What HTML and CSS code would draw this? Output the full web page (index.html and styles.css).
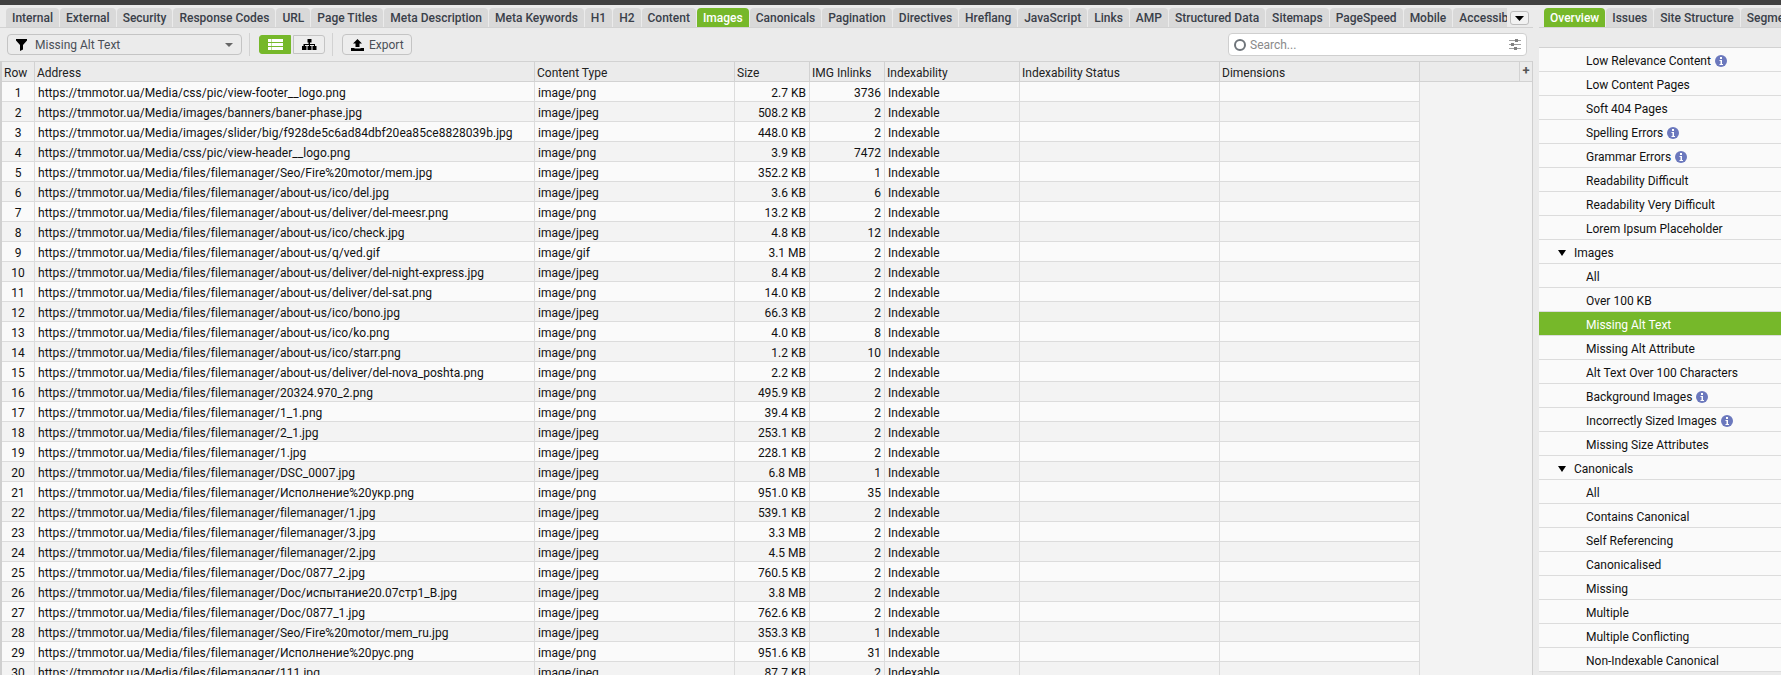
FILE: index.html
```html
<!DOCTYPE html>
<html lang="en">
<head>
    <meta charset="UTF-8">
    <title>Images - Missing Alt Text</title>
    <link rel="stylesheet" href="styles.css">
</head>
<body>
    <div class="titlebar"></div>
    <div class="panes">
        <div class="left-pane">
            <div class="tab-line">
                <div class="tabs">
                    <span class="tab">Internal</span>
                    <span class="tab">External</span>
                    <span class="tab">Security</span>
                    <span class="tab">Response Codes</span>
                    <span class="tab">URL</span>
                    <span class="tab">Page Titles</span>
                    <span class="tab">Meta Description</span>
                    <span class="tab">Meta Keywords</span>
                    <span class="tab">H1</span>
                    <span class="tab">H2</span>
                    <span class="tab">Content</span>
                    <span class="tab active">Images</span>
                    <span class="tab">Canonicals</span>
                    <span class="tab">Pagination</span>
                    <span class="tab">Directives</span>
                    <span class="tab">Hreflang</span>
                    <span class="tab">JavaScript</span>
                    <span class="tab">Links</span>
                    <span class="tab">AMP</span>
                    <span class="tab">Structured Data</span>
                    <span class="tab">Sitemaps</span>
                    <span class="tab">PageSpeed</span>
                    <span class="tab">Mobile</span>
                    <span class="tab">Accessibility</span>
                </div>
                <button class="more-tabs"><svg width="9" height="5" viewBox="0 0 9 5"><path d="M0 0h9L4.500 5z"/></svg></button>
            </div>
            <div class="toolbar">
                <div class="filter-select">
                    <svg class="funnel" width="11" height="12" viewBox="0 0 11 12"><path d="M0 0h11v1.500L7 6v4.500L4 12V6L0 1.500z"/></svg>
                    <span class="filter-label">Missing Alt Text</span>
                    <svg class="caret" width="8" height="4" viewBox="0 0 8 4"><path d="M0 0h8L4 4z"/></svg>
                </div>
                <span class="tool-sep"></span>
                <div class="view-toggle">
                    <button class="view-btn on">
                        <svg width="15" height="11" viewBox="0 0 15 11"><path d="M0 0h3v3H0zM3.500 0H15v3H3.500zM0 4h3v3H0zM3.500 4H15v3H3.500zM0 8h3v3H0zM3.500 8H15v3H3.500z"/></svg>
                    </button>
                    <button class="view-btn">
                        <svg width="15" height="11" viewBox="0 0 15 11"><path d="M5.500 0h4v3.500h-1.500v1.500h5v2h1.500v4h-4V7h1.500V6h-4v1h1.500v4h-4V7h1.500V6h-4v1h1.500v4H0V7h1.500V5h5V3.500H5.500z"/></svg>
                    </button>
                </div>
                <span class="tool-sep"></span>
                <button class="export-btn">
                    <svg width="13" height="12" viewBox="0 0 13 12"><path d="M6.500 0L11 4.500H8.500V8h-4V4.500H2zM0 9h3.500v.5h6V9H13v3H0z"/></svg>
                    Export
                </button>
                <div class="search-box">
                    <svg width="12" height="12" viewBox="0 0 12 12"><circle cx="6" cy="6" r="5" fill="none" stroke="#6f757b" stroke-width="2"/></svg>
                    <span class="search-text">Search...</span>
                    <svg class="sliders" width="12" height="11" viewBox="0 0 12 11"><path d="M0 1h12v1H0zM0 5h12v1H0zM0 9h12v1H0z" fill="#a0a0a0"/><path d="M6 0h3v3H6zM2 4h3v3H2zM5 8h3v3H5z" fill="#808080"/></svg>
                </div>
            </div>
            <div class="grid-wrap">
                <table class="grid">
                    <colgroup>
                        <col class="c-row"><col class="c-address"><col class="c-type"><col class="c-size"><col class="c-inlinks"><col class="c-index"><col class="c-status"><col class="c-dim"><col class="c-fill"><col class="c-plus">
                    </colgroup>
                    <thead>
                        <tr><th>Row</th><th>Address</th><th>Content Type</th><th>Size</th><th>IMG Inlinks</th><th>Indexability</th><th>Indexability Status</th><th>Dimensions</th><th></th><th class="plus">+</th></tr>
                    </thead>
                    <tbody>
                        <tr><td class="num">1</td><td class="url">https://tmmotor.ua/Media/css/pic/view-footer__logo.png</td><td>image/png</td><td class="r">2.7 KB</td><td class="r">3736</td><td>Indexable</td><td></td><td></td></tr>
                        <tr><td class="num">2</td><td class="url">https://tmmotor.ua/Media/images/banners/baner-phase.jpg</td><td>image/jpeg</td><td class="r">508.2 KB</td><td class="r">2</td><td>Indexable</td><td></td><td></td></tr>
                        <tr><td class="num">3</td><td class="url">https://tmmotor.ua/Media/images/slider/big/f928de5c6ad84dbf20ea85ce8828039b.jpg</td><td>image/jpeg</td><td class="r">448.0 KB</td><td class="r">2</td><td>Indexable</td><td></td><td></td></tr>
                        <tr><td class="num">4</td><td class="url">https://tmmotor.ua/Media/css/pic/view-header__logo.png</td><td>image/png</td><td class="r">3.9 KB</td><td class="r">7472</td><td>Indexable</td><td></td><td></td></tr>
                        <tr><td class="num">5</td><td class="url">https://tmmotor.ua/Media/files/filemanager/Seo/Fire%20motor/mem.jpg</td><td>image/jpeg</td><td class="r">352.2 KB</td><td class="r">1</td><td>Indexable</td><td></td><td></td></tr>
                        <tr><td class="num">6</td><td class="url">https://tmmotor.ua/Media/files/filemanager/about-us/ico/del.jpg</td><td>image/jpeg</td><td class="r">3.6 KB</td><td class="r">6</td><td>Indexable</td><td></td><td></td></tr>
                        <tr><td class="num">7</td><td class="url">https://tmmotor.ua/Media/files/filemanager/about-us/deliver/del-meesr.png</td><td>image/png</td><td class="r">13.2 KB</td><td class="r">2</td><td>Indexable</td><td></td><td></td></tr>
                        <tr><td class="num">8</td><td class="url">https://tmmotor.ua/Media/files/filemanager/about-us/ico/check.jpg</td><td>image/jpeg</td><td class="r">4.8 KB</td><td class="r">12</td><td>Indexable</td><td></td><td></td></tr>
                        <tr><td class="num">9</td><td class="url">https://tmmotor.ua/Media/files/filemanager/about-us/q/ved.gif</td><td>image/gif</td><td class="r">3.1 MB</td><td class="r">2</td><td>Indexable</td><td></td><td></td></tr>
                        <tr><td class="num">10</td><td class="url">https://tmmotor.ua/Media/files/filemanager/about-us/deliver/del-night-express.jpg</td><td>image/jpeg</td><td class="r">8.4 KB</td><td class="r">2</td><td>Indexable</td><td></td><td></td></tr>
                        <tr><td class="num">11</td><td class="url">https://tmmotor.ua/Media/files/filemanager/about-us/deliver/del-sat.png</td><td>image/png</td><td class="r">14.0 KB</td><td class="r">2</td><td>Indexable</td><td></td><td></td></tr>
                        <tr><td class="num">12</td><td class="url">https://tmmotor.ua/Media/files/filemanager/about-us/ico/bono.jpg</td><td>image/jpeg</td><td class="r">66.3 KB</td><td class="r">2</td><td>Indexable</td><td></td><td></td></tr>
                        <tr><td class="num">13</td><td class="url">https://tmmotor.ua/Media/files/filemanager/about-us/ico/ko.png</td><td>image/png</td><td class="r">4.0 KB</td><td class="r">8</td><td>Indexable</td><td></td><td></td></tr>
                        <tr><td class="num">14</td><td class="url">https://tmmotor.ua/Media/files/filemanager/about-us/ico/starr.png</td><td>image/png</td><td class="r">1.2 KB</td><td class="r">10</td><td>Indexable</td><td></td><td></td></tr>
                        <tr><td class="num">15</td><td class="url">https://tmmotor.ua/Media/files/filemanager/about-us/deliver/del-nova_poshta.png</td><td>image/png</td><td class="r">2.2 KB</td><td class="r">2</td><td>Indexable</td><td></td><td></td></tr>
                        <tr><td class="num">16</td><td class="url">https://tmmotor.ua/Media/files/filemanager/20324.970_2.png</td><td>image/png</td><td class="r">495.9 KB</td><td class="r">2</td><td>Indexable</td><td></td><td></td></tr>
                        <tr><td class="num">17</td><td class="url">https://tmmotor.ua/Media/files/filemanager/1_1.png</td><td>image/png</td><td class="r">39.4 KB</td><td class="r">2</td><td>Indexable</td><td></td><td></td></tr>
                        <tr><td class="num">18</td><td class="url">https://tmmotor.ua/Media/files/filemanager/2_1.jpg</td><td>image/jpeg</td><td class="r">253.1 KB</td><td class="r">2</td><td>Indexable</td><td></td><td></td></tr>
                        <tr><td class="num">19</td><td class="url">https://tmmotor.ua/Media/files/filemanager/1.jpg</td><td>image/jpeg</td><td class="r">228.1 KB</td><td class="r">2</td><td>Indexable</td><td></td><td></td></tr>
                        <tr><td class="num">20</td><td class="url">https://tmmotor.ua/Media/files/filemanager/DSC_0007.jpg</td><td>image/jpeg</td><td class="r">6.8 MB</td><td class="r">1</td><td>Indexable</td><td></td><td></td></tr>
                        <tr><td class="num">21</td><td class="url">https://tmmotor.ua/Media/files/filemanager/Исполнение%20укр.png</td><td>image/png</td><td class="r">951.0 KB</td><td class="r">35</td><td>Indexable</td><td></td><td></td></tr>
                        <tr><td class="num">22</td><td class="url">https://tmmotor.ua/Media/files/filemanager/filemanager/1.jpg</td><td>image/jpeg</td><td class="r">539.1 KB</td><td class="r">2</td><td>Indexable</td><td></td><td></td></tr>
                        <tr><td class="num">23</td><td class="url">https://tmmotor.ua/Media/files/filemanager/filemanager/3.jpg</td><td>image/jpeg</td><td class="r">3.3 MB</td><td class="r">2</td><td>Indexable</td><td></td><td></td></tr>
                        <tr><td class="num">24</td><td class="url">https://tmmotor.ua/Media/files/filemanager/filemanager/2.jpg</td><td>image/jpeg</td><td class="r">4.5 MB</td><td class="r">2</td><td>Indexable</td><td></td><td></td></tr>
                        <tr><td class="num">25</td><td class="url">https://tmmotor.ua/Media/files/filemanager/Doc/0877_2.jpg</td><td>image/jpeg</td><td class="r">760.5 KB</td><td class="r">2</td><td>Indexable</td><td></td><td></td></tr>
                        <tr><td class="num">26</td><td class="url">https://tmmotor.ua/Media/files/filemanager/Doc/испытание20.07стр1_B.jpg</td><td>image/jpeg</td><td class="r">3.8 MB</td><td class="r">2</td><td>Indexable</td><td></td><td></td></tr>
                        <tr><td class="num">27</td><td class="url">https://tmmotor.ua/Media/files/filemanager/Doc/0877_1.jpg</td><td>image/jpeg</td><td class="r">762.6 KB</td><td class="r">2</td><td>Indexable</td><td></td><td></td></tr>
                        <tr><td class="num">28</td><td class="url">https://tmmotor.ua/Media/files/filemanager/Seo/Fire%20motor/mem_ru.jpg</td><td>image/jpeg</td><td class="r">353.3 KB</td><td class="r">1</td><td>Indexable</td><td></td><td></td></tr>
                        <tr><td class="num">29</td><td class="url">https://tmmotor.ua/Media/files/filemanager/Исполнение%20рус.png</td><td>image/png</td><td class="r">951.6 KB</td><td class="r">31</td><td>Indexable</td><td></td><td></td></tr>
                        <tr><td class="num">30</td><td class="url">https://tmmotor.ua/Media/files/filemanager/111.jpg</td><td>image/jpeg</td><td class="r">87.7 KB</td><td class="r">2</td><td>Indexable</td><td></td><td></td></tr>
                    </tbody>
                </table>
            </div>
        </div>
        <div class="right-pane">
            <div class="tab-line side">
                <div class="tabs">
                    <span class="tab active">Overview</span>
                    <span class="tab">Issues</span>
                    <span class="tab">Site Structure</span>
                    <span class="tab">Segments</span>
                </div>
            </div>
            <div class="side-toolbar"></div>
            <svg class="icon-defs" width="0" height="0">
                <symbol id="info" viewBox="0 0 12 12">
                    <circle cx="6" cy="6" r="6" fill="#6b78bd"/>
                    <rect x="5" y="2" width="2" height="2" fill="#fff"/>
                    <path d="M4.500 5H7v4h1v1H4.500V9h1V6h-1z" fill="#fff"/>
                </symbol>
            </svg>
            <ul class="tree">
                <li>Low Relevance Content <svg class="info"><use href="#info"/></svg></li>
                <li>Low Content Pages</li>
                <li>Soft 404 Pages</li>
                <li>Spelling Errors <svg class="info"><use href="#info"/></svg></li>
                <li>Grammar Errors <svg class="info"><use href="#info"/></svg></li>
                <li>Readability Difficult</li>
                <li>Readability Very Difficult</li>
                <li>Lorem Ipsum Placeholder</li>
                <li class="group"><svg class="arrow" width="8" height="6" viewBox="0 0 8 6"><path d="M0 0h8L4 6z"/></svg>Images</li>
                <li>All</li>
                <li>Over 100 KB</li>
                <li class="selected">Missing Alt Text</li>
                <li>Missing Alt Attribute</li>
                <li>Alt Text Over 100 Characters</li>
                <li>Background Images <svg class="info"><use href="#info"/></svg></li>
                <li>Incorrectly Sized Images <svg class="info"><use href="#info"/></svg></li>
                <li>Missing Size Attributes</li>
                <li class="group"><svg class="arrow" width="8" height="6" viewBox="0 0 8 6"><path d="M0 0h8L4 6z"/></svg>Canonicals</li>
                <li>All</li>
                <li>Contains Canonical</li>
                <li>Self Referencing</li>
                <li>Canonicalised</li>
                <li>Missing</li>
                <li>Multiple</li>
                <li>Multiple Conflicting</li>
                <li>Non-Indexable Canonical</li>
            </ul>
        </div>
    </div>
</body>
</html>
```

FILE: styles.css
```css
html, body {
    height: 100%;
}
body {
    margin: 0;
    overflow: hidden;
    font-family: Roboto, "Liberation Sans", sans-serif;
    font-size: 12px;
    color: #111;
    background-color: #ebebeb;
}
.titlebar {
    height: 5px;
    margin-bottom: 3px;
    background-color: #414141;
}
.panes {
    display: flex;
    height: 667px;
}
.left-pane {
    display: flex;
    flex-direction: column;
    width: 1533px;
    flex-shrink: 0;
}
.right-pane {
    width: 242px;
    margin-left: 6px;
    flex-shrink: 0;
    overflow: hidden;
}

/* tabs */
.tab-line {
    display: flex;
    height: 19px;
    padding-left: 6px;
    border-bottom: 1px solid #d2d2d2;
    box-sizing: content-box;
}
.tab-line.side {
    padding-left: 5px;
    width: 400px;
}
.tabs {
    display: flex;
    gap: 1px;
    width: 1501px;
    overflow: hidden;
}
.side .tabs {
    width: auto;
}
.tab {
    flex-shrink: 0;
    height: 19px;
    padding: 0 6px;
    line-height: 21px;
    font-weight: 500;
    color: #3a4049;
    background-color: #d9d9d9;
    border-radius: 4px 4px 0 0;
}
.tab.active {
    color: #fff;
    background-color: #76b82a;
}
.more-tabs {
    display: flex;
    align-items: center;
    justify-content: center;
    width: 19px;
    height: 14px;
    margin: 3px 0 0 3px;
    padding: 0;
    background-color: #f2f2f2;
    border: 1px solid #bdbdbd;
    border-radius: 3px;
}

/* toolbar */
.toolbar {
    display: flex;
    align-items: center;
    height: 33px;
    padding-left: 7px;
    color: #4a4f57;
}
.filter-select {
    display: flex;
    align-items: center;
    width: 235px;
    height: 21px;
    padding: 0 8px 0 8px;
    box-sizing: border-box;
    border: 1px solid #c4c4c4;
    border-radius: 4px;
    font-size: 12px;
}
.funnel {
    margin-right: 8px;
}
.filter-label {
    flex: 1;
}
.caret {
    fill: #666;
}
.tool-sep {
    width: 1px;
    height: 23px;
    margin: 0 9px 0 7px;
    background-color: #d2d2d2;
}
.view-toggle {
    display: flex;
    gap: 2px;
}
.view-btn {
    display: flex;
    align-items: center;
    justify-content: center;
    width: 32px;
    height: 19px;
    padding: 0;
    background-color: #ededed;
    border: 1px solid #c4c4c4;
    border-radius: 0 3px 3px 0;
}
.view-btn.on {
    background-color: #76b82a;
    border-color: #76b82a;
    border-radius: 3px 0 0 3px;
}
.view-btn.on svg {
    fill: #fff;
}
.export-btn {
    display: flex;
    align-items: center;
    gap: 5px;
    width: 70px;
    height: 21px;
    padding: 0 0 0 8px;
    font-family: inherit;
    font-size: 12px;
    color: #4a4f57;
    background-color: #ededed;
    border: 1px solid #c4c4c4;
    border-radius: 4px;
}
.search-box {
    display: flex;
    align-items: center;
    width: 299px;
    height: 23px;
    margin-left: auto;
    margin-right: 6px;
    padding: 0 5px;
    box-sizing: border-box;
    background-color: #fff;
    border: 1px solid #cfcfcf;
    border-radius: 4px;
}
.search-text {
    flex: 1;
    margin-left: 4px;
    color: #8a8a8a;
}

/* results table */
.grid-wrap {
    flex: 1;
    overflow: hidden;
    background-color: #f3f3f3;
    border-left: 2px solid #cfcfcf;
    border-right: 1px solid #cfcfcf;
}
.grid {
    table-layout: fixed;
    border-collapse: separate;
    border-spacing: 0;
    width: 1530px;
}
.c-row { width: 33px; }
.c-address { width: 500px; }
.c-type { width: 200px; }
.c-size { width: 75px; }
.c-inlinks { width: 75px; }
.c-index { width: 135px; }
.c-status { width: 200px; }
.c-dim { width: 200px; }
.c-fill { width: 100px; }
.c-plus { width: 12px; }
.grid th {
    height: 21px;
    padding: 2px 2px 0;
    box-sizing: border-box;
    font-weight: 400;
    text-align: left;
    color: #222;
    background-color: #ebebeb;
    border-top: 1px solid #d2d2d2;
    border-right: 1px solid #d2d2d2;
    border-bottom: 1px solid #d2d2d2;
}
.grid th.plus {
    padding: 0 0 3px;
    border-right: none;
    font-weight: 700;
    font-size: 13px;
    text-align: center;
    color: #555;
}
.grid td {
    height: 20px;
    padding: 2px 3px 0;
    box-sizing: border-box;
    white-space: nowrap;
    overflow: hidden;
    background-color: #fafafa;
    border-right: 1px solid #dcdcdc;
    border-bottom: 1px solid #dcdcdc;
}
.grid tr:nth-child(even) td {
    background-color: #f3f3f3;
}
.grid td.num {
    text-align: center;
}
.grid td.url {
    letter-spacing: 0.04px;
}
.grid td.r {
    text-align: right;
}

/* right side tree */
.side-toolbar {
    height: 19px;
    border-bottom: 1px solid #d2d2d2;
}
.icon-defs {
    position: absolute;
}
.tree {
    margin: 0;
    padding: 0;
    list-style: none;
    background-color: #fafafa;
}
.tree li {
    display: flex;
    align-items: center;
    gap: 4px;
    height: 24px;
    padding: 2px 0 0 47px;
    box-sizing: border-box;
    border-bottom: 1px solid #dcdcdc;
    color: #111;
}
.tree li.group {
    padding-left: 19px;
    gap: 8px;
}
.tree li.selected {
    color: #fff;
    background-color: #76b82a;
}
.info {
    width: 12px;
    height: 12px;
}
```
